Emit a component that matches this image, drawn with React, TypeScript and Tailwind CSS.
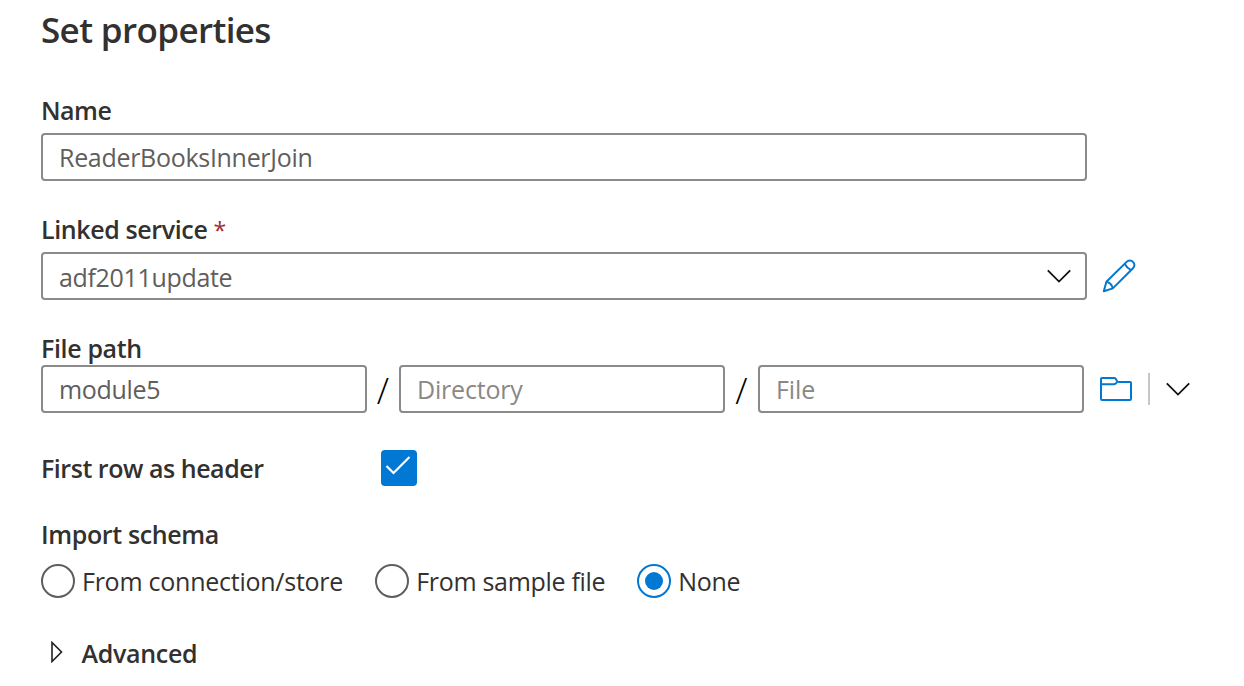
import { useState } from "react";
import type { ReactNode } from "react";

function Chevron() {
  return (
    <svg width="24" height="14" viewBox="0 0 24 14" fill="none" stroke="#111" strokeWidth="1.8" className="shrink-0">
      <path d="M0.8 1.4 12 12.6 23.2 1.4" />
    </svg>
  );
}

function Pencil() {
  return (
    <svg width="34" height="34" viewBox="0 0 34 34" fill="none" stroke="#0078d4" strokeWidth="2" strokeLinejoin="round" className="-ml-px shrink-0">
      <path d="M1.8 32.2 4.4 22.8 24.6 2.9C26.4 1 29.2 1 31 2.9 32.9 4.7 32.9 7.3 31 9.2L10.8 29.4Z" />
      <path d="M22.6 4.8C24.4 8 26 9.6 29 11.2M4.4 22.8C8 23.6 10 25.8 10.8 29.4" />
    </svg>
  );
}

function Folder() {
  return (
    <svg width="32" height="24" viewBox="0 0 32 24" fill="none" stroke="#0078d4" strokeWidth="2" strokeLinejoin="round" className="shrink-0">
      <path d="M1 22V2Q1 1 2 1H14Q15.2 1 15.8 2L17 4Q17.6 5 18.8 5H30Q31 5 31 6V22Q31 23 30 23H2Q1 23 1 22Z" />
      <path d="M1 7.2H14Q15.4 7.2 16.4 5.8L17 5" />
    </svg>
  );
}

function Label({ className, children }: { className: string; children: ReactNode }) {
  return (
    <div className="flex h-9 items-center whitespace-nowrap font-[560] text-[#323130]">
      <span className={className}>{children}</span>
    </div>
  );
}

function Field({ className, children }: { className: string; children: ReactNode }) {
  return (
    <div className={`flex h-12 shrink-0 items-center whitespace-nowrap rounded border-2 border-[#8a8a8a] pl-4 pr-3.5 ${className}`}>
      {children}
    </div>
  );
}

function Slash({ className }: { className: string }) {
  return (
    <span className={`flex h-12 shrink-0 items-center justify-center pt-1 text-[36px] font-light text-black ${className}`}>/</span>
  );
}

function Radio({ checked, onSelect, textClass, children }: { checked: boolean; onSelect: () => void; textClass: string; children: ReactNode }) {
  return (
    <button role="radio" aria-checked={checked} onClick={onSelect} className="flex shrink-0 items-center gap-[7px] whitespace-nowrap text-[#323130]">
      <span className={`flex size-[34px] items-center justify-center rounded-full border-2 ${checked ? "border-[#0078d4]" : "border-[#605e5c]"}`}>
        {checked && <span className="size-[18px] rounded-full bg-[#0078d4]" />}
      </span>
      <span className={textClass}>{children}</span>
    </button>
  );
}

export default function App() {
  const [schema, setSchema] = useState("none");
  const [header, setHeader] = useState(true);
  return (
    <main className="h-[686px] w-[1244px] overflow-hidden bg-white pl-[41px] font-['Open_Sans',sans-serif] text-[25px] leading-9">
      <h1 className="flex h-[60px] items-center text-[35px] font-[570] text-[#323130]">
        <span className="tracking-[-0.62px]">Set properties</span>
      </h1>

      <section className="pt-8">
        <Label className="tracking-[-0.5px]">Name</Label>
        <Field className="mt-[5px] w-[1046px] text-[#605e5c]">
          <span className="tracking-[-0.3px]">ReaderBooksInnerJoin</span>
        </Field>
      </section>

      <section className="pt-[30px]">
        <Label className="tracking-[-0.38px]">
          Linked service <span className="text-[23px] font-normal text-[#a4262c]">*</span>
        </Label>
        <div className="mt-[5px] flex items-center gap-4">
          <Field className="w-[1046px] justify-between text-[#605e5c]">
            <span className="pt-0.5 tracking-[-0.33px]">adf2011update</span>
            <Chevron />
          </Field>
          <Pencil />
        </div>
      </section>

      <section className="pt-[30px]">
        <Label className="tracking-[-0.35px]">File path</Label>
        <div className="-mt-px flex items-center">
          <Field className="w-[326px] text-[#605e5c]">
            <span className="tracking-[-0.3px]">module5</span>
          </Field>
          <Slash className="w-8" />
          <Field className="w-[326px] text-[#8a8886]">
            <span className="tracking-[-0.2px]">Directory</span>
          </Field>
          <Slash className="w-[33px]" />
          <Field className="w-[326px] text-[#8a8886]">
            <span className="tracking-[-0.1px]">File</span>
          </Field>
          <div className="flex items-center pl-4">
            <Folder />
            <span className="ml-4 h-8 w-0.5 bg-[#c8c6c4]" />
            <span className="ml-4">
              <Chevron />
            </span>
          </div>
        </div>
      </section>

      <section className="mt-[37px] flex h-9 items-center">
        <div className="w-[340px]">
          <Label className="tracking-[-0.46px]">First row as header</Label>
        </div>
        <button role="checkbox" aria-checked={header} aria-label="First row as header" onClick={() => setHeader(!header)} className="size-9 rounded bg-[#0078d4]">
          {header && (
            <svg width="36" height="36" viewBox="0 0 36 36" fill="none" stroke="#fff" strokeWidth="2.2">
              <path d="M5.5 16 12.5 23 28.5 7" />
            </svg>
          )}
        </button>
      </section>

      <section className="pt-[30px]">
        <Label className="tracking-[-0.37px]">Import schema</Label>
        <div role="radiogroup" className="mt-3 flex h-[34px] items-center gap-8">
          <Radio checked={schema === "store"} onSelect={() => setSchema("store")} textClass="tracking-[-0.25px]">From connection/store</Radio>
          <Radio checked={schema === "sample"} onSelect={() => setSchema("sample")} textClass="tracking-[-0.3px]">From sample file</Radio>
          <Radio checked={schema === "none"} onSelect={() => setSchema("none")} textClass="tracking-[-0.3px]">None</Radio>
        </div>
      </section>

      <section className="mt-[37px] flex items-center pl-2.5">
        <svg width="12" height="22" viewBox="0 0 12 22" fill="none" stroke="#222" strokeWidth="1.6" className="mb-0.5 shrink-0">
          <path d="M1 1.5V20.5L10.5 11Z" />
        </svg>
        <div className="pl-[18.5px]">
          <Label className="tracking-[-0.3px]">Advanced</Label>
        </div>
      </section>
    </main>
  );
}
